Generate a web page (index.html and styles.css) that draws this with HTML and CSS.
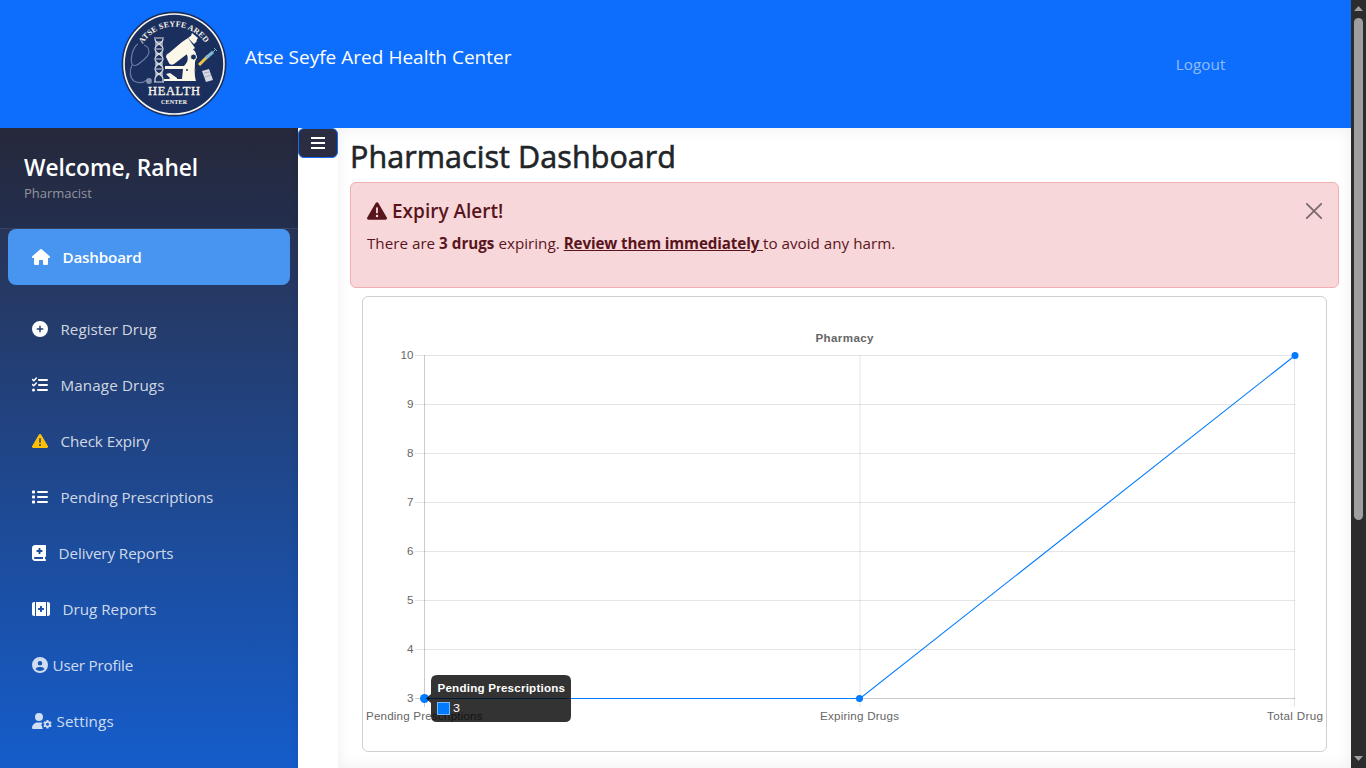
FILE: index.html
```html
<!DOCTYPE html>
<html lang="en">
<head>
<meta charset="utf-8">
<title>Pharmacist Dashboard</title>
<link rel="stylesheet" href="styles.css">
</head>
<body>
<div class="window">
  <div class="page">
    <header class="topbar">
      <div class="brand">
        <svg class="logo" width="106" height="106" viewBox="0 0 106 106">
          <defs><path id="arc" d="M21.500 33A37.500 37.500 0 0 1 86.500 36"/></defs>
          <circle cx="53" cy="53" r="52.500" fill="#1b2f5f"/>
          <circle cx="53" cy="53" r="50" fill="none" stroke="#f8f7ef" stroke-width="1.600"/>
          <text class="logo-arc"><textPath href="#arc" startOffset="0" textLength="74">ATSE SEYFE ARED</textPath></text>
          <g fill="none" stroke="#6a7ba3" stroke-width="1.200">
            <path d="M17 33c-5 3-8 14-6 20 2 3 6 1 9-2 4-3 8-6 8-10 0-3-2-6-5-7"/>
            <path d="M11 54c-3 6-2 13 2 16 5 3 9 2 13-1"/>
          </g>
          <circle cx="28" cy="70" r="2.900" fill="#8390ae"/>
          <g fill="none" stroke="#d9dce0" stroke-width="1.200">
            <path fill="#8997ae" d="M34 28c0 5 8 5 8 10s-8 5-8 10 8 5 8 10-8 5-8 10M42 28c0 5-8 5-8 10s8 5 8 10-8 5-8 10 8 5 8 10"/>
            <path d="M33 27h10M35 31h6M35 38h6M35 43h6M35 48h6M35 53h6M35 58h6M35 63h6M33 71h10"/>
            <path d="M34 68v3M42 68v3"/>
          </g>
          <g fill="#fbf8ea">
            <path d="M61 31l6-4 7 10-21 16c-2 1-4 1-5-1l-3-6c0-2 1-3 3-4z"/>
            <path d="M67 27l4-3 5 6-3 3zM70 25l1-3 6 5-2 3z"/>
            <path d="M65 42l6-4c5 2 5 8 3 13 0 5-1 12 1 19H43v-2h18l1-10H44v-3h19c4-4 5-8 2-13z"/>
            <path d="M45 63l4-1 7 5v3h-9l2-3z"/>
          </g>
          <circle cx="72.500" cy="46" r="3" fill="#1b2f5f" stroke="#fbf8ea"/>
          <circle cx="66" cy="59" r="1" fill="#1b2f5f"/>
          <path d="M78 54l9-9" stroke="#e9c34e" stroke-width="3"/>
          <path d="M85 47l7-6" stroke="#7ebbd3" stroke-width="3"/>
          <path d="M91 42l4-4M93 37l3 3" stroke="#7ebbd3"/>
          <path d="M81 60l7-2 4 11-7 2z" fill="#d5d9e1"/>
          <path d="M83 62l5-1M84 66l6-2" stroke="#a8aebd"/>
          <circle cx="74" cy="59" r=".8" fill="#a88b47"/>
          <text class="logo-health" x="53" y="84" text-anchor="middle" textLength="52">HEALTH</text>
          <text class="logo-center" x="53" y="92.500" text-anchor="middle" textLength="26">CENTER</text>
        </svg>
        <span class="brand-name">Atse Seyfe Ared Health Center</span>
      </div>
      <a class="logout">Logout</a>
    </header>
    <div class="layout">
      <aside class="sidebar">
        <div class="welcome">
          <div class="hello">Welcome, Rahel</div>
          <div class="role">Pharmacist</div>
        </div>
        <nav class="menu">
          <a class="item active"><svg width="18" height="16" viewBox="0 0 576 512"><path d="M575.8 255.5c0 18-15 32.100-32 32.100h-32l.7 160.200c0 2.700-.2 5.400-.5 8.100V472c0 22.100-17.900 40-40 40H392c-22.100 0-40-17.900-40-40V384c0-17.700-14.300-32-32-32H256c-17.700 0-32 14.300-32 32v88c0 22.100-17.900 40-40 40H104c-22.100 0-40-17.900-40-40V287.600H32c-18 0-32-14-32-32.100c0-9 3-17 10-24L266.400 8c7-7 15-8 22-8s15 2 21 7L564.800 231.500c8 7 12 15 11 24z"/></svg><span class="tight">Dashboard</span></a>
          <a class="item"><svg width="16" height="16" viewBox="0 0 512 512"><path d="M256 512A256 256 0 1 0 256 0a256 256 0 1 0 0 512zM232 344V280H168c-13.300 0-24-10.700-24-24s10.700-24 24-24h64V168c0-13.300 10.700-24 24-24s24 10.700 24 24v64h64c13.300 0 24 10.700 24 24s-10.700 24-24 24H280v64c0 13.300-10.700 24-24 24s-24-10.700-24-24z"/></svg><span>Register Drug</span></a>
          <a class="item"><svg width="16" height="16" viewBox="0 0 512 512"><path d="M192 64h288a32 32 0 0 1 0 64H224a32 32 0 0 1-32-32zM224 224h256a32 32 0 0 1 0 64H224a32 32 0 0 1 0-64zM192 384h288a32 32 0 0 1 0 64H192a32 32 0 0 1 0-64zM96 416a48 48 0 1 1-96 0 48 48 0 1 1 96 0z"/><path d="M20 84l38 36 80-88M20 244l38 36 80-88" fill="none" stroke="#fff" stroke-width="48" stroke-linecap="round" stroke-linejoin="round"/></svg><span class="loose">Manage Drugs</span></a>
          <a class="item"><svg class="warn" width="16" height="16" viewBox="0 0 512 512"><path d="M256 32c14.200 0 27.300 7.500 34.500 19.800l216 368c7.300 12.400 7.300 27.700 .2 40.100S486.300 480 472 480H40c-14.300 0-27.600-7.700-34.700-20.100s-7-27.800 .2-40.100l216-368C228.700 39.500 241.800 32 256 32zm0 128c-13.300 0-24 10.700-24 24V296c0 13.300 10.700 24 24 24s24-10.700 24-24V184c0-13.300-10.700-24-24-24zm32 224a32 32 0 1 0 -64 0 32 32 0 1 0 64 0z"/></svg><span class="snug">Check Expiry</span></a>
          <a class="item"><svg width="16" height="16" viewBox="0 0 512 512"><path d="M24 48h48q24 0 24 24v48q0 24-24 24H24q-24 0-24-24V72q0-24 24-24zM24 208h48q24 0 24 24v48q0 24-24 24H24q-24 0-24-24v-48q0-24 24-24zM24 368h48q24 0 24 24v48q0 24-24 24H24q-24 0-24-24v-48q0-24 24-24zM192 64h288a32 32 0 0 1 0 64H192a32 32 0 0 1 0-64zM192 224h288a32 32 0 0 1 0 64H192a32 32 0 0 1 0-64zM192 384h288a32 32 0 0 1 0 64H192a32 32 0 0 1 0-64z"/></svg><span class="snug">Pending Prescriptions</span></a>
          <a class="item"><svg width="14" height="16" viewBox="0 0 448 512"><path fill-rule="evenodd" d="M0 96C0 43 43 0 96 0h320c17.700 0 32 14.300 32 32v320c0 17.700-14.300 32-32 32v64c17.700 0 32 14.300 32 32s-14.300 32-32 32H96c-53 0-96-43-96-96zM64 416c0 17.700 14.300 32 32 32h256v-64H96c-17.700 0-32 14.300-32 32zM208 112v48h-48c-8.800 0-16 7.200-16 16v32c0 8.800 7.200 16 16 16h48v48c0 8.800 7.200 16 16 16h32c8.800 0 16-7.200 16-16v-48h48c8.800 0 16-7.200 16-16v-32c0-8.800-7.200-16-16-16h-48v-48c0-8.800-7.200-16-16-16h-32c-8.800 0-16 7.200-16 16z"/></svg><span class="snug">Delivery Reports</span></a>
          <a class="item"><svg width="18" height="16" viewBox="0 0 576 512"><path fill-rule="evenodd" d="M64 32h32v448H64c-35.300 0-64-28.700-64-64V96c0-35.300 28.700-64 64-64zM128 32h320v448H128zM480 32h32c35.300 0 64 28.700 64 64v320c0 35.300-28.700 64-64 64h-32zM256 176v48h-48c-8.800 0-16 7.200-16 16v32c0 8.800 7.200 16 16 16h48v48c0 8.800 7.200 16 16 16h32c8.800 0 16-7.200 16-16v-48h48c8.800 0 16-7.200 16-16v-32c0-8.800-7.200-16-16-16h-48v-48c0-8.800-7.200-16-16-16h-32c-8.800 0-16 7.200-16 16z"/></svg><span>Drug Reports</span></a>
          <a class="item soft"><svg width="16" height="16" viewBox="0 0 512 512"><path d="M399 384.200C376.900 345.800 335.400 320 288 320H224c-47.400 0-88.900 25.800-111 64.200c35.200 39.200 86.200 63.800 143 63.800s107.800-24.700 143-63.800zM0 256a256 256 0 1 1 512 0A256 256 0 1 1 0 256zm256 16a72 72 0 1 0 0-144 72 72 0 1 0 0 144z"/></svg><span class="tight">User Profile</span></a>
          <a class="item soft"><svg width="20" height="16" viewBox="0 0 640 512"><path fill-rule="evenodd" d="M224 256a128 128 0 1 0 0-256 128 128 0 1 0 0 256zM178 304h92c24 0 46 5 66 14-20 22-33 48-39 73 7 14 17 24 27 32-5 35 8 65 31 89H30c-17 0-30-13-30-30 0-98 80-178 178-178zM466 224h60l8 41 26 15 39-14 30 52-31 28v30l31 28-30 52-39-14-26 15-8 41h-60l-8-41-26-15-39 14-30-52 31-28v-30l-31-28 30-52 39 14 26-15zM496 312a49 49 0 1 0 0 98 49 49 0 1 0 0-98z"/></svg><span class="loose">Settings</span></a>
        </nav>
      </aside>
      <button class="toggle"><svg width="14" height="16" viewBox="0 0 14 16"><path d="M0 2h14v2H0zM0 7h14v2H0zM0 12h14v2H0z"/></svg></button>
      <main class="content">
        <h1 class="title">Pharmacist Dashboard</h1>
        <section class="alert">
          <div class="alert-body">
            <h4 class="alert-title"><svg width="20" height="20" viewBox="0 0 512 512"><path d="M256 32c14.200 0 27.300 7.500 34.500 19.800l216 368c7.300 12.400 7.300 27.700 .2 40.100S486.300 480 472 480H40c-14.300 0-27.600-7.700-34.700-20.100s-7-27.800 .2-40.100l216-368C228.700 39.500 241.800 32 256 32zm0 128c-13.300 0-24 10.700-24 24V296c0 13.300 10.700 24 24 24s24-10.700 24-24V184c0-13.300-10.700-24-24-24zm32 224a32 32 0 1 0 -64 0 32 32 0 1 0 64 0z"/></svg><span>Expiry Alert!</span></h4>
            <p class="alert-text">There are <b>3 drugs</b> expiring. <a class="review">Review them immediately </a>to avoid any harm.</p>
          </div>
          <svg class="close" width="16" height="16" viewBox="0 0 16 16"><path d="M.8.8l14.400 14.400M15.200.8L.8 15.200"/></svg>
        </section>
        <section class="card">
          <svg class="chart" width="963" height="454" viewBox="363 297 963 454">
            <text class="chart-title" x="844.500" y="342" text-anchor="middle" textLength="58">Pharmacy</text>
            <path class="grid" d="M415 355.500H1295M415 404.500H1295M415 453.500H1295M415 502.500H1295M415 551.500H1295M415 600.500H1295M415 649.500H1295M1294.500 355V707M860 355V707"/>
            <path class="axis" d="M424.500 355V707M415 698.500H1295"/>
            <g text-anchor="end">
              <text x="413.500" y="359" textLength="13">10</text><text x="413.500" y="408">9</text><text x="413.500" y="457">8</text><text x="413.500" y="506">7</text><text x="413.500" y="555">6</text><text x="413.500" y="604">5</text><text x="413.500" y="653">4</text><text x="413.500" y="702">3</text>
            </g>
            <text x="366" y="720" textLength="116.500">Pending Prescriptions</text>
            <text x="820" y="720" textLength="79">Expiring Drugs</text>
            <text x="1267" y="720" textLength="56">Total Drug</text>
            <path class="line" d="M424.500 698.500H860L1295 355.500"/>
            <circle class="dot" cx="424.500" cy="698.500" r="4.500"/><circle class="dot" cx="859.500" cy="698.500" r="3.500"/><circle class="dot" cx="1295" cy="355.500" r="3.500"/>
            <path class="tip" d="M437 675h128q6 0 6 6v35q0 6-6 6H437q-6 0-6-6v-13l-5-4.500 5-4.500v-13q0-6 6-6z"/>
            <text class="tip-title" x="437.500" y="692" textLength="127.500">Pending Prescriptions</text>
            <rect x="437.500" y="702.500" width="12" height="12" fill="#007bff" stroke="#7db8f8"/>
            <text class="tip-value" x="453" y="712" textLength="7" lengthAdjust="spacingAndGlyphs">3</text>
          </svg>
        </section>
      </main>
    </div>
  </div>
  <div class="scrollbar">
    <svg width="9" height="5" viewBox="0 0 9 5"><path d="M0 5L4.500 0 9 5z"/></svg>
    <div class="thumb"></div>
    <svg class="down" width="9" height="5" viewBox="0 0 9 5"><path d="M0 0L4.500 5 9 0z"/></svg>
  </div>
</div>
</body>
</html>
```
FILE: styles.css
```css
* { box-sizing: border-box; }
body { margin: 0; font-family: "Open Sans", "Noto Sans", sans-serif; font-size: 15.2px; overflow: hidden; color: #212529; background: #fff; }
svg { display: block; flex: none; }
.window { display: flex; width: 1366px; height: 768px; overflow: hidden; }
.page { width: 1351px; display: flex; flex-direction: column; }
.topbar { height: 128px; flex: none; background: #0d6efd; display: flex; justify-content: space-between; align-items: center; padding: 0 125.500px 0 121px; }
.brand { display: flex; align-items: center; gap: 18px; }
.brand-name { color: #fff; font-size: 19px; letter-spacing: 0.02px; padding-bottom: 15px; white-space: nowrap; }
.logo text { font-family: "Liberation Serif", serif; fill: #fbf8ea; font-weight: bold; }
.logo .logo-arc { font-size: 8px; }
.logo .logo-health { font-size: 12.5px; font-weight: normal; stroke: #fbf8ea; stroke-width: .3px; }
.logo .logo-center { font-size: 6px; }
.logout { color: rgba(255,255,255,.55); letter-spacing: .1px; }
.layout { display: flex; height: 640px; }
.sidebar { width: 298px; flex: none; background: linear-gradient(#2b2d42 0, #0d6efd 873px); box-shadow: inset -8px 0 10px -8px rgba(0,0,0,.1); }
.welcome { height: 101px; padding: 24px; background: rgba(0,0,0,.1); border-bottom: 1px solid rgba(255,255,255,.1); color: #fff; }
.hello { font-size: 22.7px; line-height: 31px; font-weight: 600; white-space: nowrap; }
.role { font-size: 13px; line-height: 21px; color: #93949f; }
.menu { display: flex; flex-direction: column; padding: 0 8px; }
.item { height: 56px; padding: 0 24px; display: flex; align-items: center; gap: 12.500px; color: rgba(255,255,255,.8); white-space: nowrap; }
.item svg { fill: #fff; }
.item .warn { fill: #ffc107; }
.item.soft { gap: 4.500px; }
.item.soft svg { fill: rgba(255,255,255,.8); }
.item.active { background: #4895ef; border-radius: 8px; color: #fff; font-weight: 600; margin-bottom: 16px; }
.tight { letter-spacing: -.18px; }
.snug { letter-spacing: -.08px; }
.loose { letter-spacing: .12px; }
.toggle { width: 40px; height: 30px; flex: none; background: #2b2d42; border: 1px solid #0d6efd; border-radius: 6px; padding: 0; display: flex; justify-content: center; align-items: center; }
.toggle svg { fill: #fff; }
.content { width: 1013px; padding: 9px 12px 0; box-shadow: inset 0 0 15px rgba(0,0,0,.07); }
.title { margin: 0; font-size: 30.500px; line-height: 38px; font-weight: 500; -webkit-text-stroke: .6px #212529; letter-spacing: .07px; height: 45px; white-space: nowrap; }
.alert { height: 106px; display: flex; justify-content: space-between; padding: 16px; background: #f8d7da; border: 1px solid #f1aeb5; border-radius: 6px; color: #58151c; }
.alert-title { margin: 0 0 8px; display: flex; align-items: center; gap: 5px; font-size: 19px; line-height: 24px; font-weight: 600; }
.alert-title svg { fill: #58151c; margin-bottom: 1px; }
.alert-text { margin: 0; line-height: 24px; white-space: nowrap; letter-spacing: .01px; }
.review { font-weight: 700; text-decoration: underline; letter-spacing: -.12px; }
.close { margin-top: 4px; stroke: #7c6c6d; stroke-width: 1.900; stroke-linecap: round; }
.card { width: 965px; height: 456px; margin: 8px 12px 0; border: 1px solid #ced0d1; border-radius: 6px; background: #fff; }
.chart text { font-family: "Liberation Sans", Arial, sans-serif; font-size: 11.6px; fill: #666; }
.chart .chart-title { font-weight: bold; }
.grid { stroke: rgba(0,0,0,.1); fill: none; }
.axis { stroke: rgba(0,0,0,.2); fill: none; }
.line { stroke: #007bff; fill: none; stroke-width: 1.100; }
.dot { fill: #007bff; }
.tip { fill: rgba(0,0,0,.8); }
.chart .tip-title { font-weight: bold; fill: #fff; }
.chart .tip-value { fill: #fff; }
.scrollbar { width: 15px; background: #2c2c2c; display: flex; flex-direction: column; align-items: center; padding: 6px 0 7px; }
.scrollbar svg { fill: #9f9f9f; }
.thumb { width: 9px; height: 502px; margin-top: 7px; border-radius: 5px; background: #9f9f9f; }
.down { margin-top: auto; }
```
